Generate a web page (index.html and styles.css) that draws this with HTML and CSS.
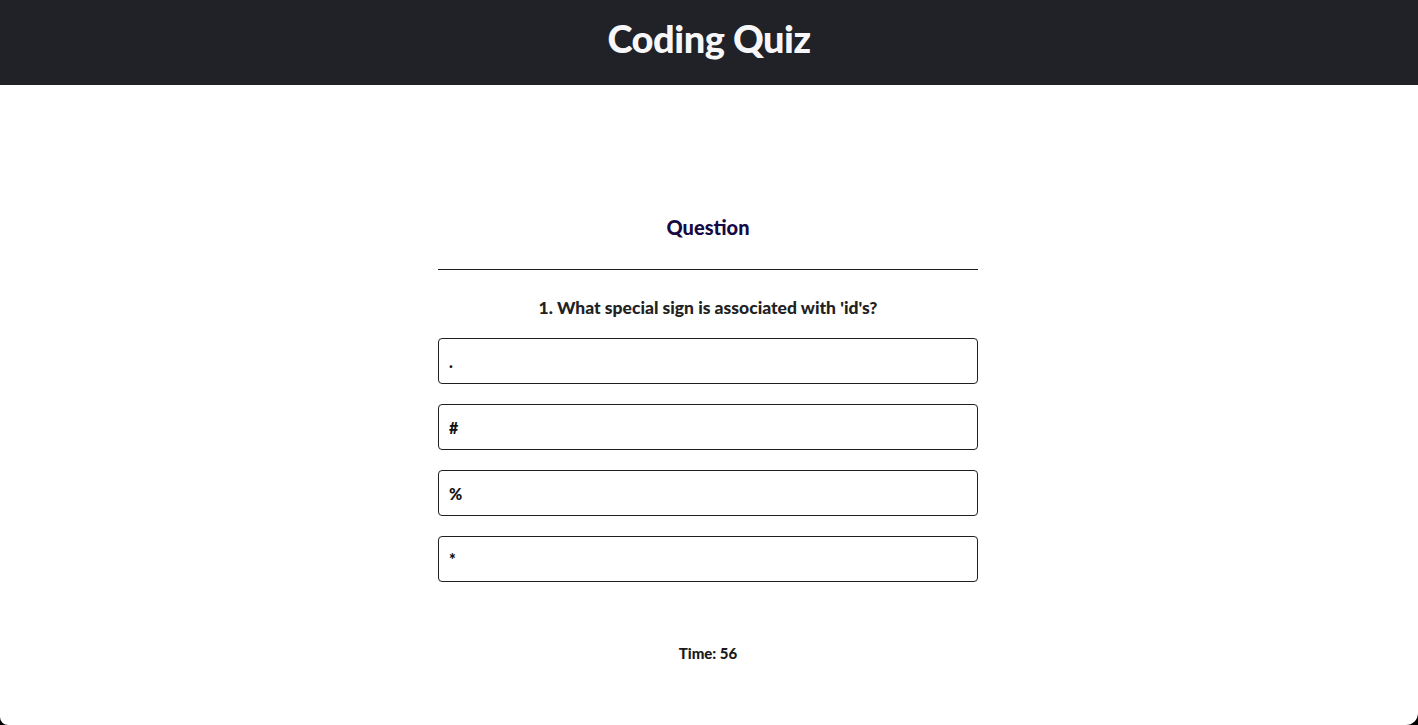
FILE: index.html
```html
<!DOCTYPE html>
<html>
<head>
<meta charset="utf-8">
<link rel="stylesheet" href="styles.css">
</head>
<body>
<div class="page">
  <header class="topbar">
    <h1 class="title">Coding Quiz</h1>
  </header>
  <main class="quiz">
    <h2 class="label">Question</h2>
    <hr class="divider">
    <p class="prompt">1. What special sign is associated with 'id's?</p>
    <div class="answers">
      <button class="answer">.</button>
      <button class="answer">#</button>
      <button class="answer">%</button>
      <button class="answer">*</button>
    </div>
    <p class="timer">Time: 56</p>
  </main>
</div>
</body>
</html>
```
FILE: styles.css
```css
html, body {
  margin: 0;
  padding: 0;
  background: #000;
  height: 725px;
  overflow: hidden;
}
body {
  font-family: "Lato", "Open Sans", sans-serif;
}
.page {
  background: #fff;
  height: 725px;
  border-radius: 0 0 12px 8px;
  overflow: hidden;
}
.topbar {
  background: #202227;
  height: 85px;
  display: flex;
  justify-content: center;
  align-items: center;
}
.title {
  margin: 0;
  color: #f7f7f9;
  font-size: 38px;
  font-weight: 900;
  letter-spacing: -0.5px;
  padding-bottom: 10px;
}
.quiz {
  width: 540px;
  margin-left: calc(50% - 271px);
  display: flex;
  flex-direction: column;
  padding-top: 130px;
}
.label {
  margin: 0;
  text-align: center;
  color: #160a45;
  font-size: 20px;
  font-weight: 900;
  line-height: 24px;
}
.divider {
  margin: 30px 0 0;
  border: none;
  border-top: 1px solid #1d1d1d;
  height: 0;
}
.prompt {
  margin: 26px 0 0;
  text-align: center;
  font-size: 17.5px;
  font-weight: 900;
  line-height: 24px;
  color: #222;
}
.answers {
  margin-top: 18px;
  display: flex;
  flex-direction: column;
  gap: 20px;
}
.answer {
  height: 46px;
  border: 1.5px solid #1f1f1f;
  border-radius: 4px;
  background: #fff;
  text-align: left;
  padding: 0 10px;
  font-family: inherit;
  font-size: 16px;
  font-weight: 900;
  color: #111;
}
.timer {
  margin: 62px 0 0;
  text-align: center;
  font-size: 15px;
  font-weight: 900;
  color: #1a1a1a;
}
```
